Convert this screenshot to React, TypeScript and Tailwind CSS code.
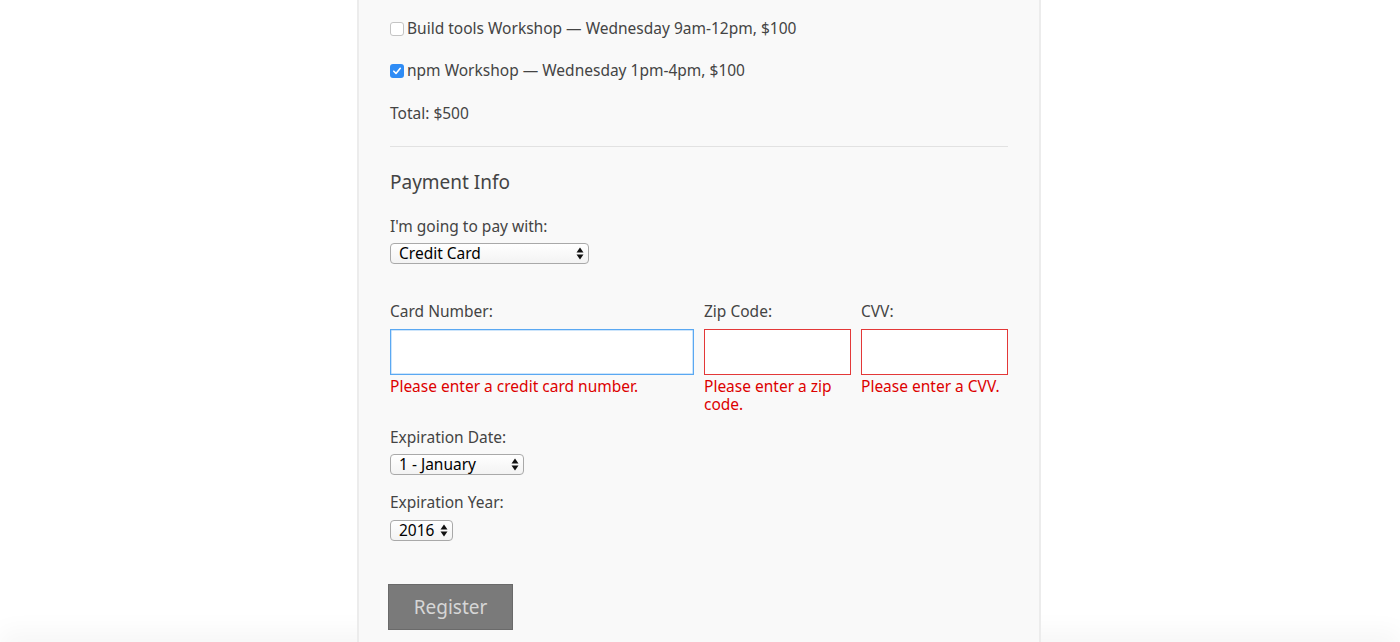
import { ReactNode } from 'react'

const font = { fontFamily: '"Noto Sans", "Open Sans", sans-serif' }

const Checkbox = ({ checked }: { checked?: boolean }) => (
    <span
        className={
            checked
                ? "w-[14px] h-[14px] rounded-[3px] bg-[#2f8cf5] flex items-center justify-center shrink-0"
                : "w-[14px] h-[14px] rounded-[3px] bg-white border border-[#c4c4c4] shrink-0"
        }
    >
        {checked && (
            <svg width="10" height="10" viewBox="0 0 10 10">
                <path d="M1.8 5.2 L4 7.4 L8.3 2.3" fill="none" stroke="white" strokeWidth="1.6" strokeLinecap="round" strokeLinejoin="round" />
            </svg>
        )}
    </span>
)

const SelectBox = ({ value, width }: { value: string; width: string }) => (
    <div className={`${width} h-[21px] rounded-[4px] border border-[#a9a9a9] bg-gradient-to-b from-white to-[#f3f3f3] flex items-center justify-between pl-[8px] pr-[4px] text-[15.5px] text-black`}>
        <span className="leading-none">{value}</span>
        <svg width="8" height="13" viewBox="0 0 8 13">
            <path d="M4 0.5 L7.5 5.5 L0.5 5.5 Z" fill="#111" />
            <path d="M4 12.5 L7.5 7.5 L0.5 7.5 Z" fill="#111" />
        </svg>
    </div>
)

const Field = ({ label, error, border, children }: { label: string; error: string; border: string; children?: ReactNode }) => (
    <div className="flex flex-col">
        <label className="h-[18px] leading-[18px] text-[#444]">{label}</label>
        <div className={`mt-[9px] h-[46px] bg-white border ${border}`}>{children}</div>
        <p className="mt-[2px] leading-[18px] text-[#dd0000]">{error}</p>
    </div>
)

export default function App() {
    return (
        <div className="min-h-screen bg-white text-[15.5px]" style={font}>
            <div className="w-[684px] mx-auto -translate-x-px bg-[#f9f9f9] border-x-2 border-[#ececec] pl-[31px] pr-[31px] pt-[20px] pb-[12px] text-[#444]">
                {/* Activities */}
                <div className="flex flex-col gap-[24px]">
                    <label className="flex items-center gap-[3px] h-[18px]">
                        <Checkbox />
                        <span>Build tools Workshop — Wednesday 9am-12pm, $100</span>
                    </label>
                    <label className="flex items-center gap-[3px] h-[18px]">
                        <Checkbox checked />
                        <span>npm Workshop — Wednesday 1pm-4pm, $100</span>
                    </label>
                    <p className="h-[18px] leading-[18px]">Total: $500</p>
                </div>

                <hr className="mt-[24px] border-t border-[#e2e2e2]" />

                {/* Payment */}
                <h2 className="mt-[23px] text-[19px] leading-[24px] text-[#444]">Payment Info</h2>

                <p className="mt-[23px] h-[18px] leading-[18px]">I'm going to pay with:</p>
                <div className="mt-[8px]">
                    <SelectBox value="Credit Card" width="w-[199px]" />
                </div>

                <div className="mt-[38px] grid grid-cols-[304px_147px_147px] gap-x-[10px]">
                    <Field label="Card Number:" error="Please enter a credit card number." border="border-[#5aa8f2] shadow-[inset_0_0_0_0.5px_#9ccbf7]" />
                    <Field label="Zip Code:" error="Please enter a zip code." border="border-[#e33838]" />
                    <Field label="CVV:" error="Please enter a CVV." border="border-[#e33838]" />
                </div>

                <p className="mt-[15px] h-[18px] leading-[18px]">Expiration Date:</p>
                <div className="mt-[8px]">
                    <SelectBox value="1 - January" width="w-[134px]" />
                </div>

                <p className="mt-[18px] h-[18px] leading-[18px]">Expiration Year:</p>
                <div className="mt-[9px]">
                    <SelectBox value="2016" width="w-[63px]" />
                </div>

                <button className="mt-[43px] -ml-[2px] w-[125px] h-[46px] bg-[#7a7a7a] border border-[#6a6a6a] text-[#d6d6d6] text-[19px]">
                    Register
                </button>
            </div>
            <div className="h-[40px] bg-white shadow-[0_-12px_24px_rgba(0,0,0,0.035)]" />
        </div>
    )
}
